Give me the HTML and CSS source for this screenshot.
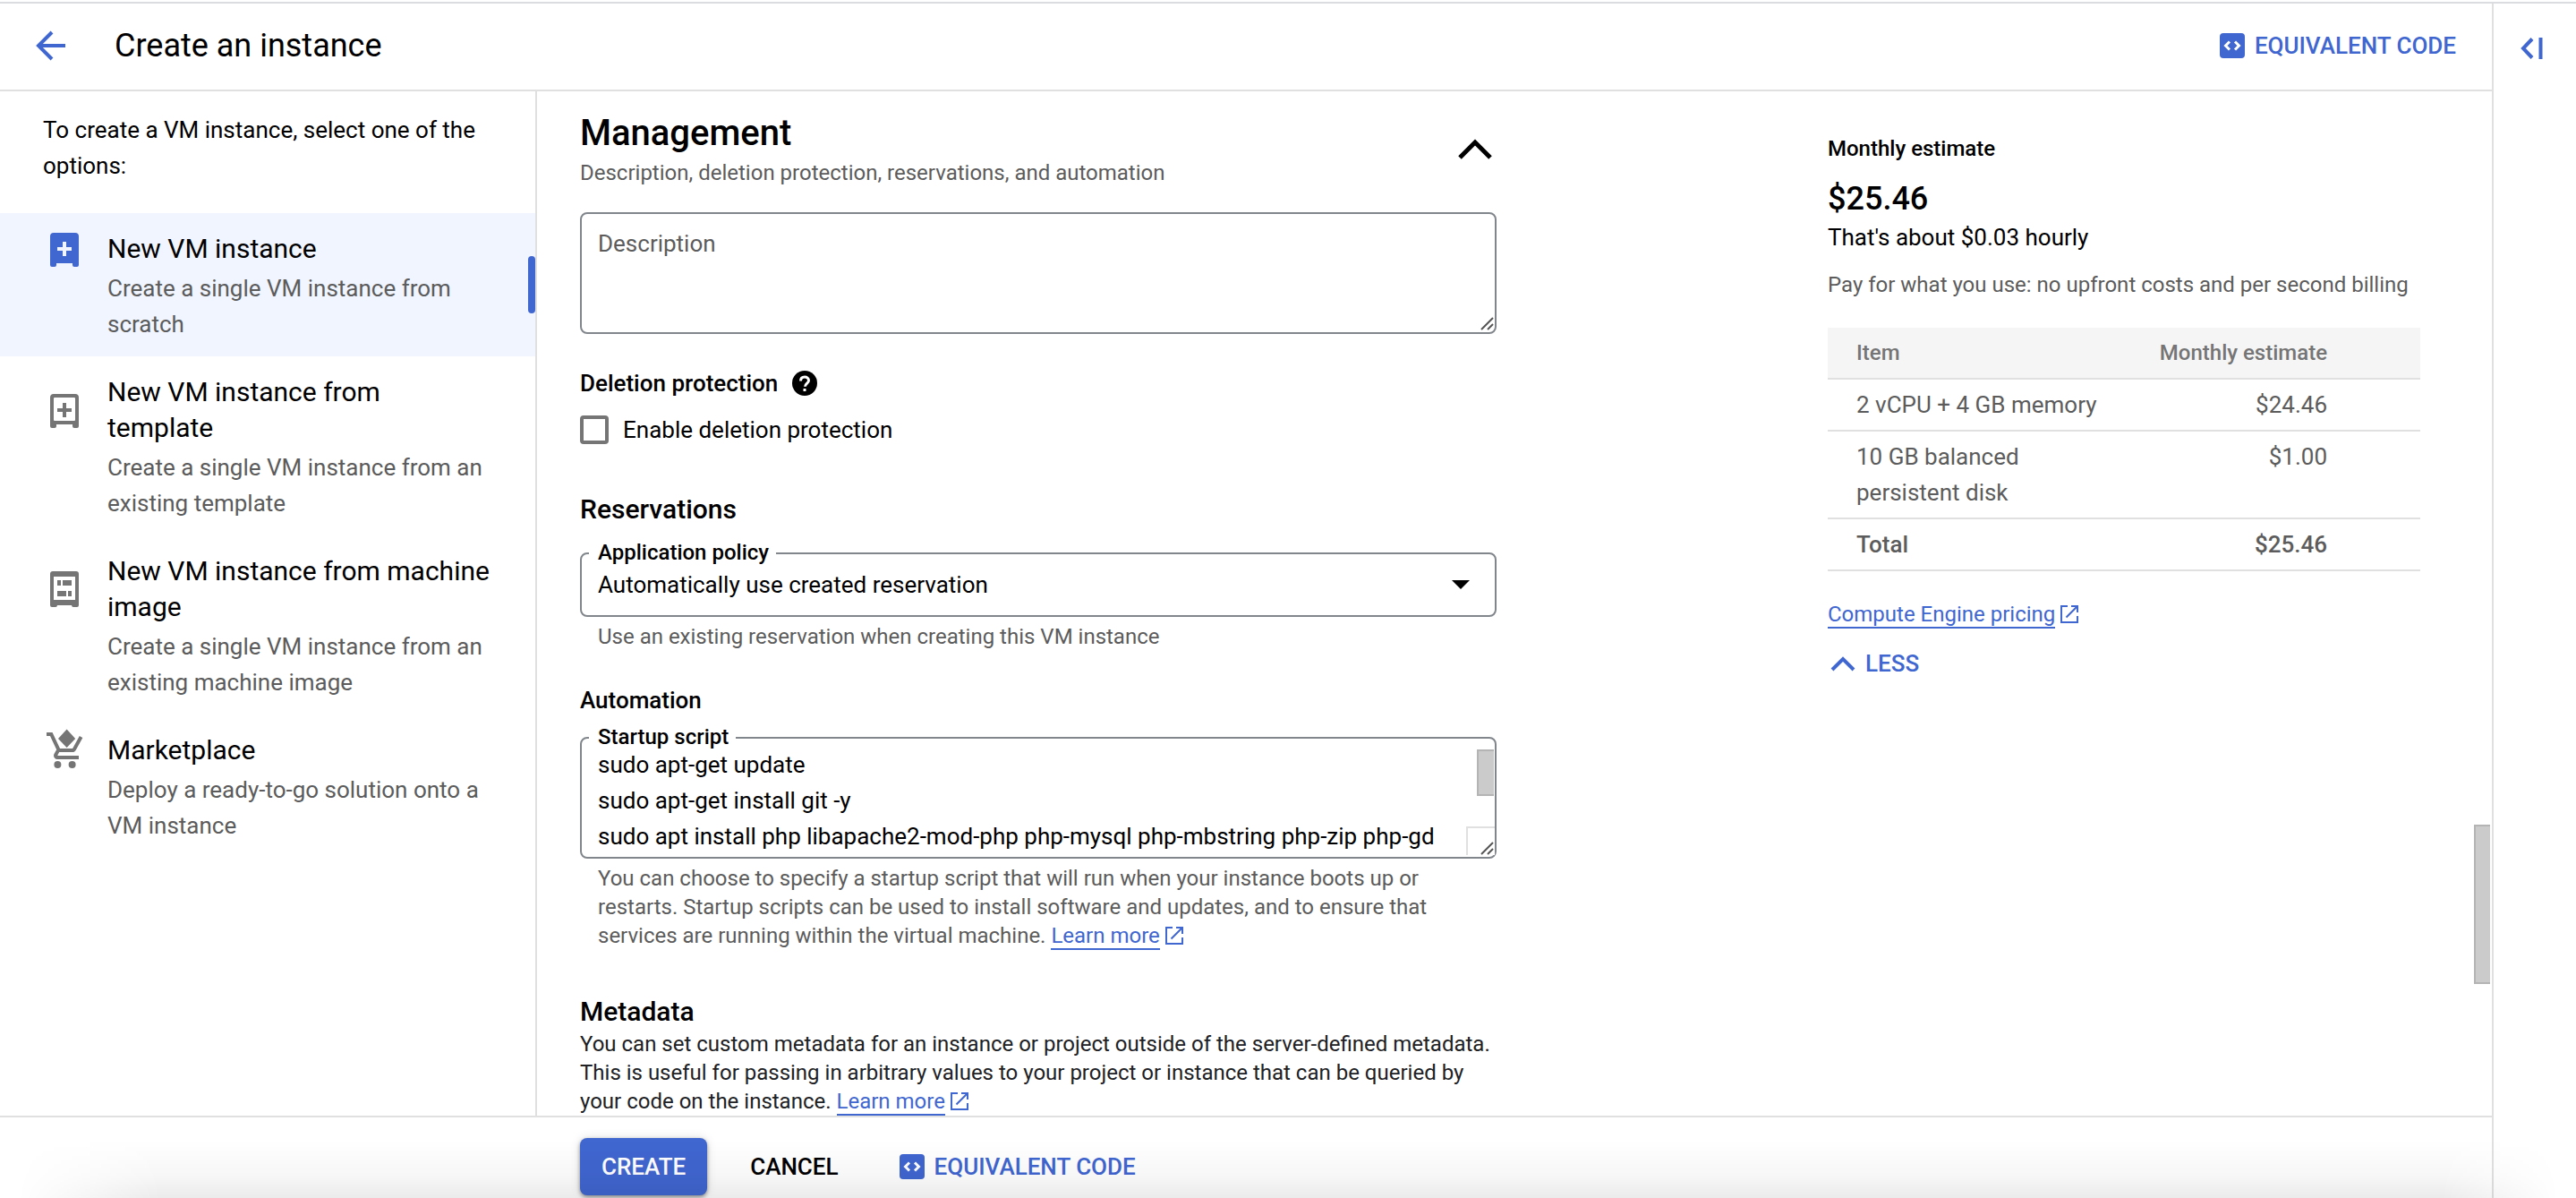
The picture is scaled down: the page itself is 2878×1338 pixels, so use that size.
FILE: index.html
```html
<!DOCTYPE html>
<html lang="en">
<head>
<meta charset="utf-8">
<meta name="viewport" content="width=device-width, initial-scale=1">
<title>Create an instance</title>
<link rel="stylesheet" href="styles.css">
</head>
<body>
<svg class="sprite" aria-hidden="true">
  <symbol id="code" viewBox="0 0 28 28">
    <rect width="28" height="28" rx="4" fill="currentColor"/>
    <path d="M11 9.5 6.5 14l4.500 4.500M17 9.500l4.500 4.500-4.500 4.500" fill="none" stroke="#fff" stroke-width="3"/>
  </symbol>
  <symbol id="external" viewBox="0 0 20 20">
    <path d="M8 1H1v18h18v-7M12 1h7v7M19 1 6.500 13.500" fill="none" stroke="currentColor" stroke-width="2"/>
  </symbol>
  <symbol id="grip" viewBox="0 0 16 16">
    <path d="M1 15 14 2M8 15l6-6" fill="none" stroke="#555" stroke-width="2"/>
  </symbol>
</svg>

<div class="app">
  <div class="page">
    <header class="topbar">
      <button class="icon-button" type="button" aria-label="Back">
        <svg class="back" viewBox="0 0 34 34"><path d="M33 17H4M18 2 3 17l15 15" fill="none" stroke="currentColor" stroke-width="4"/></svg>
      </button>
      <h1 class="page-title">Create an instance</h1>
      <button class="text-button link-color" type="button"><svg class="code-icon"><use href="#code"/></svg>EQUIVALENT CODE</button>
    </header>

    <div class="columns">
      <nav class="options" aria-label="Instance options">
        <p class="options-intro">To create a VM instance, select one of the options:</p>
        <a class="option selected" href="#new">
          <svg class="option-icon" viewBox="0 0 48 48"><path fill="currentColor" fill-rule="evenodd" d="M12 6h24a4 4 0 0 1 4 4v32q0 2-2 2h-3q-2 0-2-2v-2H15v2q0 2-2 2h-3q-2 0-2-2V10a4 4 0 0 1 4-4zM22 16v6h-6v4h6v6h4v-6h6v-4h-6v-6z"/></svg>
          <span class="option-title">New VM instance</span>
          <span class="option-text">Create a single VM instance from scratch</span>
        </a>
        <a class="option" href="#template">
          <svg class="option-icon" viewBox="0 0 48 48"><path fill="currentColor" fill-rule="evenodd" d="M12 6h24a4 4 0 0 1 4 4v32q0 2-2 2h-3q-2 0-2-2v-2H15v2q0 2-2 2h-3q-2 0-2-2V10a4 4 0 0 1 4-4zM13 10q-1 0-1 1v24q0 1 1 1h22q1 0 1-1V11q0-1-1-1zM22 16h4v6h6v4h-6v6h-4v-6h-6v-4h6z"/></svg>
          <span class="option-title">New VM instance from template</span>
          <span class="option-text">Create a single VM instance from an existing template</span>
        </a>
        <a class="option" href="#image">
          <svg class="option-icon" viewBox="0 0 48 48"><path fill="currentColor" fill-rule="evenodd" d="M11 4h26a3 3 0 0 1 3 3v35q0 2-2 2h-4q-2 0-2-2H16q0 2-2 2h-4q-2 0-2-2V7a3 3 0 0 1 3-3zM12 10v26h24V10zM16 14h4v6h-4zM22 14h10v6H22zM16 26h10v6H16zM28 26h4v6h-4z"/></svg>
          <span class="option-title">New VM instance from machine image</span>
          <span class="option-text">Create a single VM instance from an existing machine image</span>
        </a>
        <a class="option" href="#marketplace">
          <svg class="option-icon" viewBox="-1 0 24 24"><g fill="currentColor"><path d="M12.300 .3l4.800 5.200-4.800 5-4.800-5z"/><circle cx="7.200" cy="20" r="2"/><circle cx="15.300" cy="20" r="2"/><path d="M7.170 14.750l.03-.12.9-1.630h7.450c.75 0 1.410-.41 1.750-1.030l3.860-7.010L19.420 4h-.01l-1.100 2-2.760 5H8.530l-.13-.27L6.160 6l-.95-2-.94-2H1v2h2l3.600 7.590-1.350 2.450c-.16.28-.25.61-.25.96 0 1.100.9 2 2 2h12v-2H7.420c-.13 0-.25-.11-.25-.25z"/></g></svg>
          <span class="option-title">Marketplace</span>
          <span class="option-text">Deploy a ready-to-go solution onto a VM instance</span>
        </a>
      </nav>

      <main class="content">
        <form class="form" id="instance-form">
          <div class="section-head">
            <div>
              <h2 class="section-title">Management</h2>
              <p class="section-text">Description, deletion protection, reservations, and automation</p>
            </div>
            <button class="icon-button collapse" type="button" aria-label="Collapse section">
              <svg class="chevron" viewBox="0 0 40 24"><path d="M3 21 20 4l17 17" fill="none" stroke="currentColor" stroke-width="5"/></svg>
            </button>
          </div>

          <div class="field">
            <textarea class="control area area-description" aria-label="Description" placeholder="Description"></textarea>
            <svg class="grip"><use href="#grip"/></svg>
          </div>

          <h3 class="label-title">Deletion protection
            <svg class="help" viewBox="0 0 28 28"><circle cx="14" cy="14" r="14" fill="currentColor"/><path d="M9.500 11.500C9.500 8.500 11.500 7 14 7s4.500 1.600 4.500 4c0 3-4 3.300-4 6.800" fill="none" stroke="#fff" stroke-width="3"/><rect x="12.500" y="20" width="3" height="3" fill="#fff"/></svg>
          </h3>
          <label class="check"><input class="checkbox" type="checkbox">Enable deletion protection</label>

          <h3 class="group-title">Reservations</h3>
          <div class="field">
            <label class="notch" for="policy">Application policy</label>
            <select class="control select" id="policy"><option>Automatically use created reservation</option></select>
            <svg class="caret" viewBox="0 0 20 10"><path d="M0 0h20L10 10z"/></svg>
          </div>
          <p class="hint">Use an existing reservation when creating this VM instance</p>

          <h3 class="label-title">Automation</h3>
          <div class="field field-script">
            <label class="notch" for="script">Startup script</label>
            <textarea class="control area area-script" id="script">sudo apt-get update
sudo apt-get install git -y
sudo apt install php libapache2-mod-php php-mysql php-mbstring php-zip php-gd</textarea>
            <span class="area-thumb"></span>
            <span class="area-corner"></span>
            <svg class="grip"><use href="#grip"/></svg>
          </div>
          <p class="hint">You can choose to specify a startup script that will run when your instance boots up or restarts. Startup scripts can be used to install software and updates, and to ensure that services are running within the virtual machine. <a class="link" href="#startup-help">Learn more</a><svg class="external"><use href="#external"/></svg></p>

          <h3 class="group-title metadata-title">Metadata</h3>
          <p class="body-text">You can set custom metadata for an instance or project outside of the server-defined metadata. This is useful for passing in arbitrary values to your project or instance that can be queried by your code on the instance. <a class="link" href="#metadata-help">Learn more</a><svg class="external"><use href="#external"/></svg></p>
        </form>

        <aside class="estimate">
          <h2 class="estimate-title">Monthly estimate</h2>
          <p class="estimate-price">$25.46</p>
          <p class="estimate-hourly">That's about $0.03 hourly</p>
          <p class="estimate-note">Pay for what you use: no upfront costs and per second billing</p>
          <table class="costs">
            <thead><tr><th scope="col">Item</th><th class="amount" scope="col">Monthly estimate</th></tr></thead>
            <tbody>
              <tr><td>2 vCPU + 4 GB memory</td><td class="amount">$24.46</td></tr>
              <tr><td>10 GB balanced persistent disk</td><td class="amount">$1.00</td></tr>
              <tr class="total"><td>Total</td><td class="amount">$25.46</td></tr>
            </tbody>
          </table>
          <p class="pricing"><a class="link" href="#pricing">Compute Engine pricing</a><svg class="external"><use href="#external"/></svg></p>
          <button class="text-button link-color less" type="button"><svg class="less-icon" viewBox="0 0 28 18"><path d="M2 16 14 4l12 12" fill="none" stroke="currentColor" stroke-width="4"/></svg>LESS</button>
        </aside>
        <span class="page-thumb"></span>
      </main>
    </div>

    <footer class="actions">
      <button class="create" type="submit" form="instance-form">CREATE</button>
      <button class="text-button" type="button">CANCEL</button>
      <button class="text-button link-color" type="button"><svg class="code-icon"><use href="#code"/></svg>EQUIVALENT CODE</button>
    </footer>
  </div>

  <aside class="rail">
    <button class="icon-button" type="button" aria-label="Show panel">
      <svg class="panel-icon" viewBox="0 0 26 24"><path d="M13 1.500 3 12l10 10.500M22.500 0v24" fill="none" stroke="currentColor" stroke-width="4"/></svg>
    </button>
  </aside>
</div>
<div class="bottom-shade"></div>
</body>
</html>
```

FILE: styles.css
```css
:root {
  --blue: #4066d0;
  --line: #e0e0e0;
  --outline: #80868b;
  --muted: #5c5c5c;
}

* { box-sizing: border-box; }

body {
  margin: 0;
  background: #fff;
  color: #000;
  font: 400 26px/40px Roboto, "Liberation Sans", sans-serif;
}

h1, h2, h3, p { margin: 0; font-weight: 500; }
p { font-weight: 400; }

button {
  border: 0;
  padding: 0;
  background: none;
  color: inherit;
  font: inherit;
  font-weight: 500;
  cursor: pointer;
}

svg { display: block; flex: none; }

.sprite { position: absolute; width: 0; height: 0; }

.app {
  display: flex;
  height: 100vh;
  padding-top: 2px;
}

.app::before {
  content: "";
  position: absolute;
  top: 2px;
  left: 0;
  right: 0;
  height: 2px;
  background: #dadce0;
}

.page {
  flex: 1;
  min-width: 0;
  display: flex;
  flex-direction: column;
}

/* Top bar */
.topbar {
  display: flex;
  align-items: center;
  height: 100px;
  padding: 2px 40px 2px;
  border-bottom: 2px solid var(--line);
}

.icon-button { color: var(--blue); }
.back { width: 34px; height: 34px; }

.page-title {
  flex: 1;
  margin-left: 54px;
  font-size: 36px;
  font-weight: 400;
}

.text-button {
  display: flex;
  align-items: center;
  gap: 11px;
}

.link-color { color: var(--blue); }
.code-icon { width: 28px; height: 28px; }

/* Columns */
.columns {
  flex: 1;
  min-height: 0;
  display: flex;
}

.options {
  flex: none;
  width: 600px;
  border-right: 2px solid var(--line);
}

.options-intro { padding: 23px 48px 33px; }

.option {
  position: relative;
  display: grid;
  grid-template-columns: 48px 1fr;
  column-gap: 24px;
  row-gap: 4px;
  align-items: center;
  padding: 20px 48px 16px;
  color: #757575;
  text-decoration: none;
}

.option-icon { width: 48px; height: 48px; margin: -4px 0; }
.option-title { color: #000; font-size: 30px; }
.option-text { grid-column: 2; color: var(--muted); }

.selected { background: #f0f5ff; color: var(--blue); }

.selected::after {
  content: "";
  position: absolute;
  top: 48px;
  right: 0;
  width: 8px;
  height: 64px;
  border-radius: 4px;
  background: var(--blue);
}

.content {
  position: relative;
  flex: 1;
  min-width: 0;
  display: flex;
  justify-content: space-between;
  gap: 48px;
  padding: 0 80px 0 48px;
  overflow: hidden;
}

/* Form */
.form {
  flex: 0 1 1024px;
  padding-top: 23px;
}

.section-head {
  display: flex;
  justify-content: space-between;
  align-items: center;
  margin-bottom: 28px;
}

.section-title { font-size: 40px; line-height: 48px; margin-bottom: 4px; }
.section-text { font-size: 24px; line-height: 32px; color: var(--muted); }
.collapse { color: #000; padding-right: 4px; }
.chevron { width: 40px; height: 24px; }

.field { position: relative; }

.control {
  display: block;
  width: 100%;
  margin: 0;
  border: 2px solid var(--outline);
  border-radius: 8px;
  background: #fff;
  color: #000;
  font: inherit;
}

.area {
  height: 136px;
  resize: none;
  overflow: hidden;
}

.area-description { padding: 13px 18px; }
.area-description::placeholder { color: var(--muted); opacity: 1; }
.area-script { padding: 9px 32px 0 18px; }

.select {
  height: 72px;
  padding: 0 48px 0 18px;
  appearance: none;
}

.notch {
  position: absolute;
  top: -16px;
  left: 10px;
  padding: 0 8px 0 10px;
  background: #fff;
  font-size: 24px;
  font-weight: 500;
  line-height: 32px;
}

.caret {
  position: absolute;
  top: 31px;
  right: 30px;
  width: 20px;
  height: 10px;
  pointer-events: none;
}

.grip {
  position: absolute;
  right: 2px;
  bottom: 4px;
  width: 16px;
  height: 16px;
}

.area-thumb {
  position: absolute;
  top: 14px;
  right: 3px;
  width: 19px;
  height: 52px;
  border: 2px solid #b4b4b4;
  border-right: 0;
  background: #cbcbcb;
}

.area-corner {
  position: absolute;
  right: 2px;
  bottom: 4px;
  width: 32px;
  height: 32px;
  border: 2px solid var(--line);
  border-width: 2px 0 0 2px;
  background: #fff;
}

.label-title {
  display: flex;
  align-items: center;
  gap: 16px;
  margin-top: 35px;
  font-size: 26px;
}

.help { width: 28px; height: 28px; }

.check {
  display: flex;
  align-items: center;
  gap: 16px;
  margin-top: 12px;
}

.checkbox {
  width: 32px;
  height: 32px;
  margin: 0;
  border: 4px solid #757575;
  border-radius: 4px;
  appearance: none;
}

.group-title {
  margin: 49px 0 28px;
  font-size: 30px;
}

.metadata-title { margin-bottom: 0; }

.hint {
  margin-top: 6px;
  padding: 0 20px;
  color: var(--muted);
  font-size: 24px;
  line-height: 32px;
}

.field-script { margin-top: 21px; }

.body-text { color: #202124; font-size: 24px; line-height: 32px; }

.link {
  border-bottom: 2px solid var(--blue);
  color: var(--blue);
  text-decoration: none;
}

.external {
  display: inline-block;
  width: 20px;
  height: 20px;
  margin-left: 6px;
  color: var(--blue);
  vertical-align: -2px;
}

/* Cost estimate */
.estimate {
  flex: 0 0 662px;
  padding-top: 48px;
}

.estimate-title { font-size: 24px; line-height: 32px; }
.estimate-price { margin-top: 20px; font-size: 36px; font-weight: 500; }
.estimate-hourly { margin-top: 3px; }

.estimate-note {
  margin: 17px 0 32px;
  color: var(--muted);
  font-size: 24px;
  line-height: 32px;
}

.costs {
  width: 100%;
  border-spacing: 0;
  color: var(--muted);
}

.costs th,
.costs td {
  width: 346px;
  padding: 8px 32px;
  border-bottom: 2px solid var(--line);
  text-align: left;
  vertical-align: top;
}

.costs th {
  background: #f5f5f5;
  color: #757575;
  font-size: 24px;
  font-weight: 500;
}

.costs .amount { width: auto; padding: 8px 104px 8px 0; text-align: right; }
.total { font-weight: 500; }

.pricing { margin-top: 32px; font-size: 24px; line-height: 32px; }
.less { margin: 19px 0 0 3px; }
.less-icon { width: 28px; height: 18px; }

.page-thumb {
  position: absolute;
  top: 74%;
  transform: translateY(-28px);
  right: 2px;
  width: 18px;
  height: 178px;
  border: 2px solid #b4b4b4;
  border-right: 0;
  background: #cbcbcb;
}

/* Footer */
.actions {
  display: flex;
  align-items: center;
  gap: 48px;
  padding: 23px 48px 3px 648px;
  border-top: 2px solid var(--line);
}

.create {
  height: 64px;
  padding: 0 24px;
  border-radius: 8px;
  background: var(--blue);
  color: #fff;
  box-shadow: 0 2px 4px rgba(0, 0, 0, .4), 0 0 12px rgba(0, 0, 0, .12);
}

.actions .link-color { margin-left: 20px; }

/* Right rail */
.rail {
  flex: none;
  width: 94px;
  padding: 40px 30px;
  border-left: 2px solid var(--line);
}

.rail .icon-button { display: block; line-height: 24px; }
.panel-icon { width: 26px; height: 24px; }

.bottom-shade {
  position: fixed;
  left: 0;
  right: 0;
  bottom: 0;
  height: 64px;
  pointer-events: none;
  background: linear-gradient(rgba(0, 0, 0, 0), rgba(0, 0, 0, .03) 60%, rgba(0, 0, 0, .08));
  mask-image: linear-gradient(90deg, transparent 20px, #000 180px, #000 calc(100% - 150px), transparent calc(100% - 20px));
}
```
